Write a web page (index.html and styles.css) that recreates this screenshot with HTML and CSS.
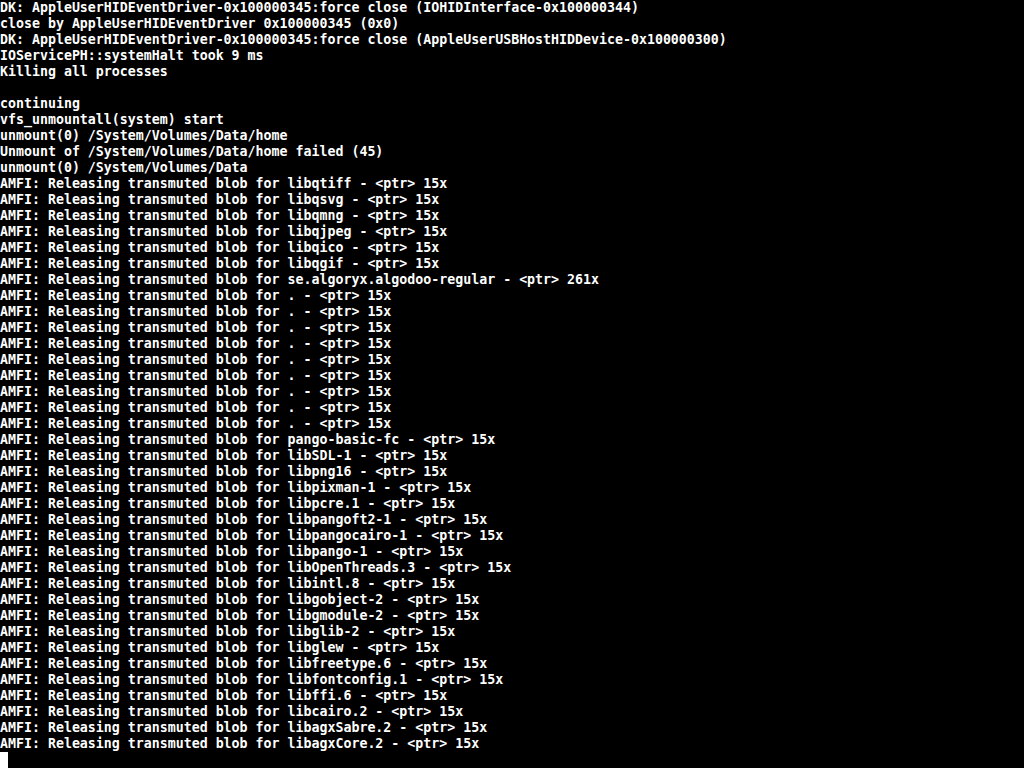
FILE: index.html
```html
<!DOCTYPE html>
<html>
<head>
<meta charset="utf-8">
<link rel="stylesheet" href="styles.css">
</head>
<body>
<pre class="console">DK: AppleUserHIDEventDriver-0x100000345:force close (IOHIDInterface-0x100000344)
close by AppleUserHIDEventDriver 0x100000345 (0x0)
DK: AppleUserHIDEventDriver-0x100000345:force close (AppleUserUSBHostHIDDevice-0x100000300)
IOServicePH::systemHalt took 9 ms
Killing all processes

continuing
vfs_unmountall(system) start
unmount(0) /System/Volumes/Data/home
Unmount of /System/Volumes/Data/home failed (45)
unmount(0) /System/Volumes/Data
AMFI: Releasing transmuted blob for libqtiff - &lt;ptr&gt; 15x
AMFI: Releasing transmuted blob for libqsvg - &lt;ptr&gt; 15x
AMFI: Releasing transmuted blob for libqmng - &lt;ptr&gt; 15x
AMFI: Releasing transmuted blob for libqjpeg - &lt;ptr&gt; 15x
AMFI: Releasing transmuted blob for libqico - &lt;ptr&gt; 15x
AMFI: Releasing transmuted blob for libqgif - &lt;ptr&gt; 15x
AMFI: Releasing transmuted blob for se.algoryx.algodoo-regular - &lt;ptr&gt; 261x
AMFI: Releasing transmuted blob for . - &lt;ptr&gt; 15x
AMFI: Releasing transmuted blob for . - &lt;ptr&gt; 15x
AMFI: Releasing transmuted blob for . - &lt;ptr&gt; 15x
AMFI: Releasing transmuted blob for . - &lt;ptr&gt; 15x
AMFI: Releasing transmuted blob for . - &lt;ptr&gt; 15x
AMFI: Releasing transmuted blob for . - &lt;ptr&gt; 15x
AMFI: Releasing transmuted blob for . - &lt;ptr&gt; 15x
AMFI: Releasing transmuted blob for . - &lt;ptr&gt; 15x
AMFI: Releasing transmuted blob for . - &lt;ptr&gt; 15x
AMFI: Releasing transmuted blob for pango-basic-fc - &lt;ptr&gt; 15x
AMFI: Releasing transmuted blob for libSDL-1 - &lt;ptr&gt; 15x
AMFI: Releasing transmuted blob for libpng16 - &lt;ptr&gt; 15x
AMFI: Releasing transmuted blob for libpixman-1 - &lt;ptr&gt; 15x
AMFI: Releasing transmuted blob for libpcre.1 - &lt;ptr&gt; 15x
AMFI: Releasing transmuted blob for libpangoft2-1 - &lt;ptr&gt; 15x
AMFI: Releasing transmuted blob for libpangocairo-1 - &lt;ptr&gt; 15x
AMFI: Releasing transmuted blob for libpango-1 - &lt;ptr&gt; 15x
AMFI: Releasing transmuted blob for libOpenThreads.3 - &lt;ptr&gt; 15x
AMFI: Releasing transmuted blob for libintl.8 - &lt;ptr&gt; 15x
AMFI: Releasing transmuted blob for libgobject-2 - &lt;ptr&gt; 15x
AMFI: Releasing transmuted blob for libgmodule-2 - &lt;ptr&gt; 15x
AMFI: Releasing transmuted blob for libglib-2 - &lt;ptr&gt; 15x
AMFI: Releasing transmuted blob for libglew - &lt;ptr&gt; 15x
AMFI: Releasing transmuted blob for libfreetype.6 - &lt;ptr&gt; 15x
AMFI: Releasing transmuted blob for libfontconfig.1 - &lt;ptr&gt; 15x
AMFI: Releasing transmuted blob for libffi.6 - &lt;ptr&gt; 15x
AMFI: Releasing transmuted blob for libcairo.2 - &lt;ptr&gt; 15x
AMFI: Releasing transmuted blob for libagxSabre.2 - &lt;ptr&gt; 15x
AMFI: Releasing transmuted blob for libagxCore.2 - &lt;ptr&gt; 15x
<span class="cursor"></span></pre>
</body>
</html>
```
FILE: styles.css
```css
html, body {
  margin: 0;
  padding: 0;
  background: #000;
  width: 1024px;
  height: 768px;
  overflow: hidden;
}
.console {
  margin: 0;
  padding: 0;
  color: #fff;
  font-family: "DejaVu Sans Mono", monospace;
  font-weight: bold;
  font-size: 13.28px;
  line-height: 16px;
  white-space: pre;
}
.cursor {
  display: inline-block;
  width: 8px;
  height: 16px;
  background: #fff;
  vertical-align: top;
}
```
